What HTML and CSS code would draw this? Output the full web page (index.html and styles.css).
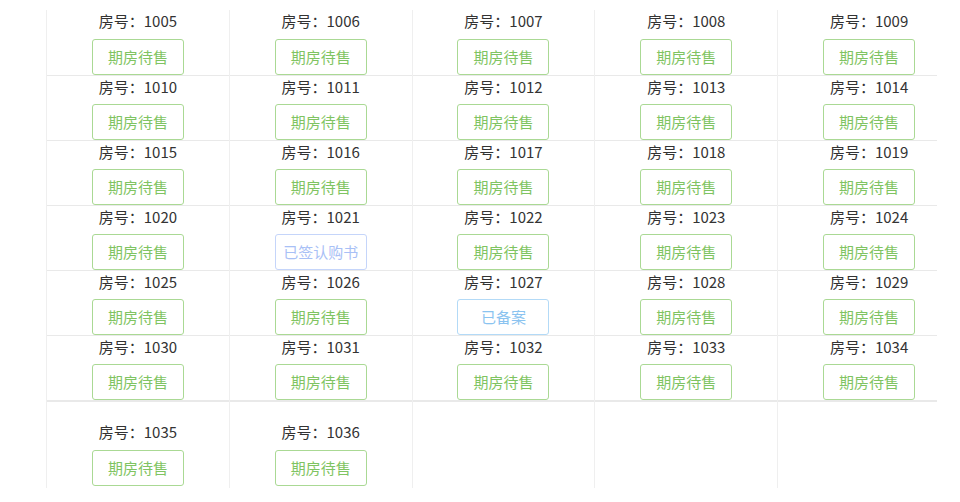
FILE: index.html
```html
<!DOCTYPE html>
<html lang="zh-CN">
<head>
<meta charset="utf-8">
<title>房号</title>
<link rel="stylesheet" href="styles.css">
</head>
<body>
<div class="board">
  <div class="row first">
    <div class="cell"><div class="no">房号：1005</div><div class="btn green">期房待售</div></div>
    <div class="cell"><div class="no">房号：1006</div><div class="btn green">期房待售</div></div>
    <div class="cell"><div class="no">房号：1007</div><div class="btn green">期房待售</div></div>
    <div class="cell"><div class="no">房号：1008</div><div class="btn green">期房待售</div></div>
    <div class="cell"><div class="no">房号：1009</div><div class="btn green">期房待售</div></div>
  </div>
  <div class="row">
    <div class="cell"><div class="no">房号：1010</div><div class="btn green">期房待售</div></div>
    <div class="cell"><div class="no">房号：1011</div><div class="btn green">期房待售</div></div>
    <div class="cell"><div class="no">房号：1012</div><div class="btn green">期房待售</div></div>
    <div class="cell"><div class="no">房号：1013</div><div class="btn green">期房待售</div></div>
    <div class="cell"><div class="no">房号：1014</div><div class="btn green">期房待售</div></div>
  </div>
  <div class="row">
    <div class="cell"><div class="no">房号：1015</div><div class="btn green">期房待售</div></div>
    <div class="cell"><div class="no">房号：1016</div><div class="btn green">期房待售</div></div>
    <div class="cell"><div class="no">房号：1017</div><div class="btn green">期房待售</div></div>
    <div class="cell"><div class="no">房号：1018</div><div class="btn green">期房待售</div></div>
    <div class="cell"><div class="no">房号：1019</div><div class="btn green">期房待售</div></div>
  </div>
  <div class="row">
    <div class="cell"><div class="no">房号：1020</div><div class="btn green">期房待售</div></div>
    <div class="cell"><div class="no">房号：1021</div><div class="btn purple">已签认购书</div></div>
    <div class="cell"><div class="no">房号：1022</div><div class="btn green">期房待售</div></div>
    <div class="cell"><div class="no">房号：1023</div><div class="btn green">期房待售</div></div>
    <div class="cell"><div class="no">房号：1024</div><div class="btn green">期房待售</div></div>
  </div>
  <div class="row">
    <div class="cell"><div class="no">房号：1025</div><div class="btn green">期房待售</div></div>
    <div class="cell"><div class="no">房号：1026</div><div class="btn green">期房待售</div></div>
    <div class="cell"><div class="no">房号：1027</div><div class="btn blue">已备案</div></div>
    <div class="cell"><div class="no">房号：1028</div><div class="btn green">期房待售</div></div>
    <div class="cell"><div class="no">房号：1029</div><div class="btn green">期房待售</div></div>
  </div>
  <div class="row thick">
    <div class="cell"><div class="no">房号：1030</div><div class="btn green">期房待售</div></div>
    <div class="cell"><div class="no">房号：1031</div><div class="btn green">期房待售</div></div>
    <div class="cell"><div class="no">房号：1032</div><div class="btn green">期房待售</div></div>
    <div class="cell"><div class="no">房号：1033</div><div class="btn green">期房待售</div></div>
    <div class="cell"><div class="no">房号：1034</div><div class="btn green">期房待售</div></div>
  </div>
  <div class="row last">
    <div class="cell"><div class="no">房号：1035</div><div class="btn green">期房待售</div></div>
    <div class="cell"><div class="no">房号：1036</div><div class="btn green">期房待售</div></div>
    <div class="cell"></div>
    <div class="cell"></div>
    <div class="cell"></div>
  </div>
</div>
</body>
</html>
```

FILE: styles.css
```css
html, body {
  margin: 0;
  padding: 0;
  background: #ffffff;
}
body {
  font-family: "Noto Sans CJK SC", "Noto Sans", sans-serif;
  color: #333333;
}
.board {
  margin: 10px 0 0 46px;
  width: 914px;
}
.row {
  display: flex;
  height: 65px;
  box-sizing: border-box;
  padding-bottom: 1px;
  background: linear-gradient(#e9e9e9, #e9e9e9) left bottom / calc(100% - 23px) 1px no-repeat;
}
.row.first {
  height: 66px;
}
.row.thick {
  height: 66px;
  padding-bottom: 2px;
  background-size: calc(100% - 23px) 2px;
}
.row.last {
  height: 86px;
  padding: 19px 0 0 0;
  background: none;
}
.cell {
  flex: 1 1 0;
  display: flex;
  flex-direction: column;
  align-items: center;
  border-left: 1px solid #efefef;
  margin-bottom: -1px;
}
.row.thick .cell {
  margin-bottom: -2px;
}
.row.last .cell {
  margin-top: -19px;
  padding-top: 19px;
  margin-bottom: 0;
}
.no {
  font-size: 15px;
  line-height: 22px;
  height: 22px;
}
.btn {
  margin-top: 6px;
  width: 92px;
  height: 36px;
  box-sizing: border-box;
  border-radius: 3px;
  border: 1px solid #a9d893;
  font-size: 15px;
  line-height: 34px;
  text-align: center;
}
.row.first .btn,
.row.last .btn {
  margin-top: 7px;
}
.green {
  color: #7fc462;
  border-color: #aad994;
}
.purple {
  color: #a8c0f6;
  border-color: #c5d5fa;
}
.blue {
  color: #8ac3f0;
  border-color: #b3daf7;
}
```
